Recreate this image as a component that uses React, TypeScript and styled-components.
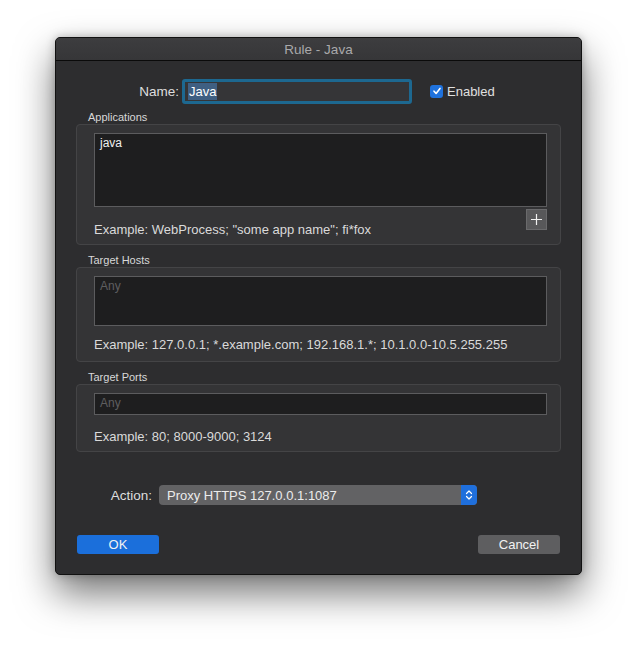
import React from "react";
import styled, {createGlobalStyle} from "styled-components";

const GlobalStyle = createGlobalStyle`
	html, body {
		margin: 0;
		padding: 0;
		background: #ffffff;
	}
	body {
		font-family: "Liberation Sans", Arial, sans-serif;
		-webkit-font-smoothing: antialiased;
	}
`;

const Page = styled.div`
	width: 637px;
	height: 649px;
	padding: 37px 0 0 55px;
	box-sizing: border-box;
	overflow: hidden;
`;

const Window = styled.div`
	width: 527px;
	height: 538px;
	background: #2d2d2f;
	border-radius: 5px;
	border: 1px solid #111;
	box-sizing: border-box;
	box-shadow: 0 18px 38px rgba(0, 0, 0, 0.55), 0 0 10px rgba(0, 0, 0, 0.25);
	display: flex;
	flex-direction: column;
	overflow: hidden;
`;

const TitleBar = styled.div`
	height: 22px;
	flex: none;
	background: linear-gradient(#3d3d3f, #363638);
	border-bottom: 1px solid #0a0a0a;
	display: flex;
	align-items: center;
	justify-content: center;
	color: #a9a9ab;
	font-size: 13.5px;
`;

const Body = styled.div`
	display: flex;
	flex-direction: column;
	padding: 18px 0 0 0;
	color: #dcdcdc;
	font-size: 13px;
`;

const NameRow = styled.div`
	display: flex;
	align-items: center;
	height: 24px;
`;

const RowLabel = styled.label<{ $width: number }>`
	width: ${p => p.$width}px;
	text-align: right;
	color: #dedede;
	font-size: 13.5px;
	flex: none;
`;

const NameField = styled.div`
	margin-left: 3px;
	width: 221px;
	height: 19px;
	background: #353537;
	border: 3px solid #1d6890;
	border-radius: 3px;
	display: flex;
	align-items: center;
	padding-left: 3px;
`;

const Selected = styled.span`
	background: #3f5f82;
	color: #ffffff;
	font-size: 13px;
	line-height: 17px;
	padding: 0 1px;
`;

const CheckRow = styled.label`
	display: flex;
	align-items: center;
	gap: 4px;
	margin-left: 18px;
	color: #e0e0e0;
	font-size: 13px;
`;

const CheckBox = styled.span`
	width: 13px;
	height: 13px;
	border-radius: 3px;
	background: #1f72dd;
	display: flex;
	align-items: center;
	justify-content: center;
`;

const GroupLabel = styled.div<{ $top: number }>`
	margin: ${p => p.$top}px 0 0 32px;
	font-size: 11px;
	color: #d8d8d8;
	line-height: 13px;
`;

const GroupBox = styled.div<{ $height: number }>`
	margin: 0 0 0 20px;
	width: 485px;
	height: ${p => p.$height}px;
	box-sizing: border-box;
	background: #343436;
	border: 1px solid #444446;
	border-radius: 4px;
	padding: 8px 13px 0 17px;
	display: flex;
	flex-direction: column;
`;

const TextArea = styled.div<{ $height: number }>`
	height: ${p => p.$height}px;
	box-sizing: border-box;
	background: #1e1e1f;
	border: 1px solid #5c5c5e;
	padding: 2px 5px;
	font-size: 12px;
	color: #f0f0f0;
`;

const Placeholder = styled.span`
	color: #5e5e60;
`;

const AddRow = styled.div`
	display: flex;
	justify-content: flex-end;
	margin-top: 2px;
	height: 20px;
`;

const AddButton = styled.button`
	width: 21px;
	height: 21px;
	padding: 0;
	background: #58585a;
	border: 1px solid #6a6a6c;
	display: flex;
	align-items: center;
	justify-content: center;
`;

const Example = styled.div<{ $top: number }>`
	margin-top: ${p => p.$top}px;
	font-size: 13px;
	color: #dadada;
	line-height: 15px;
`;

const ActionRow = styled.div`
	display: flex;
	align-items: center;
	margin-top: 33px;
	height: 20px;
`;

const Select = styled.div`
	margin-left: 7px;
	width: 318px;
	height: 20px;
	box-sizing: border-box;
	background: #626264;
	border-radius: 4px;
	display: flex;
	align-items: center;
	justify-content: space-between;
	padding-left: 8px;
	color: #ececec;
	font-size: 13px;
	overflow: hidden;
`;

const Stepper = styled.div`
	width: 16px;
	height: 20px;
	background: #1f6fdc;
	display: flex;
	align-items: center;
	justify-content: center;
`;

const ButtonRow = styled.div`
	display: flex;
	justify-content: space-between;
	padding: 0 21px 0 21px;
	margin-top: 30px;
`;

const Button = styled.button<{ $primary?: boolean }>`
	width: 82px;
	height: 19px;
	border: none;
	border-radius: 3px;
	background: ${p => p.$primary ? "#1b6fdb" : "#5e5e60"};
	color: #f2f2f2;
	font-family: inherit;
	font-size: 13px;
	padding: 0;
`;

export default function App () {
	return (
		<Page>
			<GlobalStyle />
			<Window>
				<TitleBar>Rule - Java</TitleBar>
				<Body>
					<NameRow>
						<RowLabel $width={123}>Name:</RowLabel>
						<NameField><Selected>Java</Selected></NameField>
						<CheckRow>
							<CheckBox>
								<svg width="10" height="10" viewBox="0 0 10 10">
									<path d="M2 5.2 L4.1 7.4 L8 2.4" fill="none" stroke="#fff" strokeWidth="1.6" strokeLinecap="round" strokeLinejoin="round" />
								</svg>
							</CheckBox>
							Enabled
						</CheckRow>
					</NameRow>

					<GroupLabel $top={8}>Applications</GroupLabel>
					<GroupBox $height={121}>
						<TextArea $height={74}>java</TextArea>
						<AddRow>
							<AddButton>
								<svg width="13" height="13" viewBox="0 0 13 13">
									<path d="M6.5 1 V12 M1 6.5 H12" stroke="#f0f0f0" strokeWidth="1.2" />
								</svg>
							</AddButton>
						</AddRow>
						<Example $top={-7}>Example: WebProcess; "some app name"; fi*fox</Example>
					</GroupBox>

					<GroupLabel $top={9}>Target Hosts</GroupLabel>
					<GroupBox $height={95}>
						<TextArea $height={50}><Placeholder>Any</Placeholder></TextArea>
						<Example $top={11}>Example: 127.0.0.1; *.example.com; 192.168.1.*; 10.1.0.0-10.5.255.255</Example>
					</GroupBox>

					<GroupLabel $top={9}>Target Ports</GroupLabel>
					<GroupBox $height={68}>
						<TextArea $height={22}><Placeholder>Any</Placeholder></TextArea>
						<Example $top={14}>Example: 80; 8000-9000; 3124</Example>
					</GroupBox>

					<ActionRow>
						<RowLabel $width={96}>Action:</RowLabel>
						<Select>
							Proxy HTTPS 127.0.0.1:1087
							<Stepper>
								<svg width="8" height="12" viewBox="0 0 8 12">
									<path d="M1.5 4.5 L4 2 L6.5 4.5 M1.5 7.5 L4 10 L6.5 7.5" fill="none" stroke="#fff" strokeWidth="1.2" strokeLinecap="round" strokeLinejoin="round" />
								</svg>
							</Stepper>
						</Select>
					</ActionRow>

					<ButtonRow>
						<Button $primary>OK</Button>
						<Button>Cancel</Button>
					</ButtonRow>
				</Body>
			</Window>
		</Page>
	);
}
